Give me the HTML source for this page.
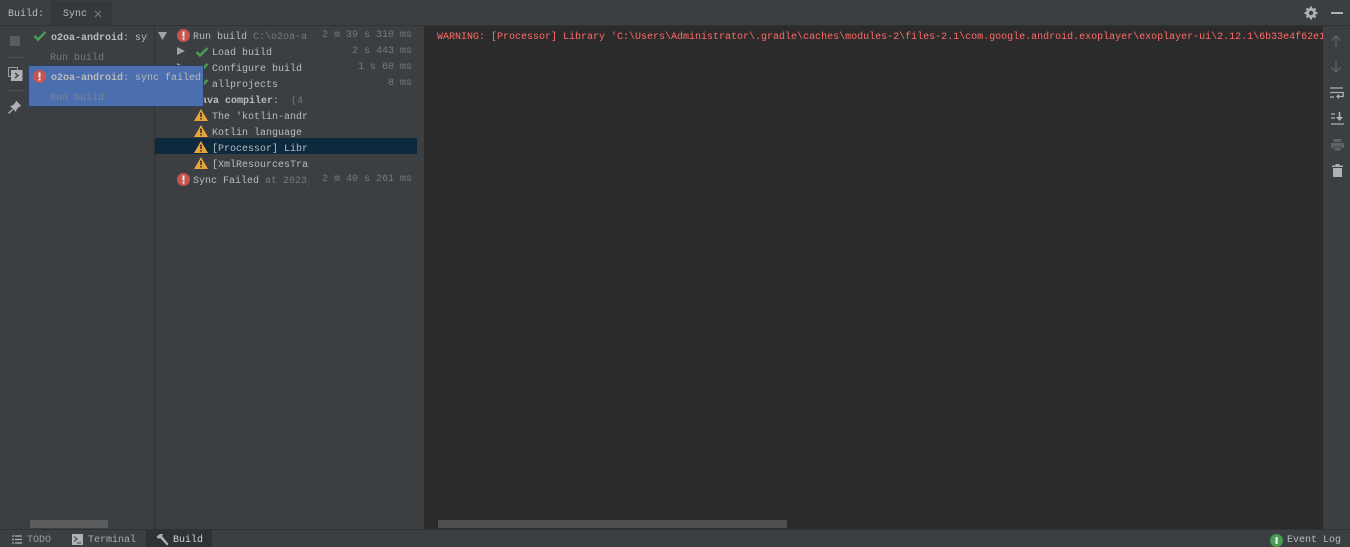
<!DOCTYPE html>
<html><head><meta charset="utf-8">
<style>
html,body{margin:0;padding:0;width:1350px;height:547px;overflow:hidden;background:#3c3f41}
body{position:relative;font-family:"Liberation Mono",monospace;font-size:10px;color:#bbb;line-height:16px;white-space:pre}
.a{position:absolute}
.t{position:absolute;height:16px;overflow:hidden}
.g{color:#787878}
.b{font-weight:bold}
.r{position:absolute;text-align:right;color:#787878;right:938px;height:16px}
svg{position:absolute;overflow:visible}
</style></head><body>
<!-- top bar -->
<div class="a" style="left:0;top:0;width:1350px;height:25px;background:#3c3f41;border-bottom:1px solid #323232"></div>
<div class="a" style="left:51px;top:1px;width:61px;height:24px;background:#36393b"></div>
<div class="t" style="left:8px;top:7px">Build:</div>
<div class="t" style="left:63px;top:7px">Sync</div>
<svg style="left:94px;top:10px" width="8" height="8"><path d="M1 1L7 7M7 1L1 7" stroke="#6f7274" stroke-width="1.3"/></svg>
<svg style="left:1304px;top:6px" width="14" height="14" viewBox="0 0 14 14"><circle cx="7" cy="7" r="3.8" fill="none" stroke="#afb1b3" stroke-width="2.6"/><path d="M7 0.5V13.5M0.5 7H13.5M2.4 2.4L11.6 11.6M11.6 2.4L2.4 11.6" stroke="#afb1b3" stroke-width="2"/><circle cx="7" cy="7" r="2.2" fill="#3c3f41"/></svg>
<div class="a" style="left:1331px;top:12px;width:12px;height:2px;background:#afb1b3"></div>

<!-- left toolbar -->
<div class="a" style="left:10px;top:36px;width:10px;height:10px;background:#595b5d"></div>
<div class="a" style="left:7px;top:57px;width:18px;height:1px;background:#515151"></div>
<svg style="left:8px;top:67px" width="15" height="15" viewBox="0 0 15 15"><rect x="0.5" y="0.5" width="9" height="9" fill="none" stroke="#9a9c9e"/><rect x="3" y="3" width="11.5" height="11" fill="#afb1b3"/><path d="M7 6L10 8.5L7 11" fill="none" stroke="#3c3f41" stroke-width="1.4"/></svg>
<div class="a" style="left:7px;top:90px;width:18px;height:1px;background:#515151"></div>
<svg style="left:8px;top:100px" width="14" height="14" viewBox="0 0 14 14"><path d="M8 0.5L13.5 6L11.5 6.5L8.5 9.5L8 12L2 6L4.5 5.5L7.5 2.5Z" fill="#afb1b3"/><path d="M4.5 9.5L0.5 13.5" stroke="#afb1b3" stroke-width="1.3"/></svg>

<!-- build list -->
<div class="a" style="left:154px;top:26px;width:1px;height:503px;background:#323232"></div>
<svg style="left:33px;top:30px" width="14" height="12" viewBox="0 0 14 12"><path d="M1.5 6L5 9.5L12.5 2" fill="none" stroke="#499c54" stroke-width="2.6"/></svg>
<div class="t" style="left:51px;top:31px;width:97px"><span class="b">o2oa-android</span>: sync</div>
<div class="t g" style="left:50px;top:51px">Run build</div>

<!-- tree -->
<svg style="left:158px;top:32px" width="9" height="8"><path d="M0 0H9L4.5 8Z" fill="#a0a2a4"/></svg>
<svg style="left:177px;top:29px" width="13" height="13" viewBox="0 0 13 13"><circle cx="6.5" cy="6.5" r="6.5" fill="#c75450"/><rect x="5.5" y="2.5" width="2" height="5" fill="#eee"/><rect x="5.5" y="8.5" width="2" height="2" fill="#eee"/></svg>
<div class="t" style="left:193px;top:30px;width:116px">Run build <span class="g">C:\o2oa-a:</span></div>
<div class="r" style="top:28px">2 m 39 s 310 ms</div>

<svg style="left:177px;top:47px" width="8" height="8"><path d="M0 0L8 4L0 8Z" fill="#a0a2a4"/></svg>
<svg style="left:195px;top:46px" width="14" height="12" viewBox="0 0 14 12"><path d="M1.5 6L5 9.5L12.5 2" fill="none" stroke="#499c54" stroke-width="2.6"/></svg>
<div class="t" style="left:212px;top:46px">Load build</div>
<div class="r" style="top:44px">2 s 443 ms</div>

<svg style="left:177px;top:63px" width="8" height="8"><path d="M0 0L8 4L0 8Z" fill="#a0a2a4"/></svg>
<svg style="left:195px;top:62px" width="14" height="12" viewBox="0 0 14 12"><path d="M1.5 6L5 9.5L12.5 2" fill="none" stroke="#499c54" stroke-width="2.6"/></svg>
<div class="t" style="left:212px;top:62px">Configure build</div>
<div class="r" style="top:60px">1 s 60 ms</div>

<svg style="left:195px;top:78px" width="14" height="12" viewBox="0 0 14 12"><path d="M1.5 6L5 9.5L12.5 2" fill="none" stroke="#499c54" stroke-width="2.6"/></svg>
<div class="t" style="left:212px;top:78px">allprojects</div>
<div class="r" style="top:76px">8 ms</div>

<div class="t" style="left:195px;top:94px;width:114px"><span class="b">Java compiler</span>:  <span class="g">(4 w</span></div>

<div class="a" style="left:155px;top:138px;width:262px;height:16px;background:#0d293e"></div>

<svg style="left:194px;top:109px" width="14" height="12" viewBox="0 0 14 12"><path d="M7 0L14 12H0Z" fill="#e8a33d"/><rect x="6.2" y="3.5" width="1.6" height="4.5" fill="#333"/><rect x="6.2" y="9" width="1.6" height="1.6" fill="#333"/></svg>
<div class="t" style="left:212px;top:110px;width:95px">The 'kotlin-android</div>
<svg style="left:194px;top:125px" width="14" height="12" viewBox="0 0 14 12"><path d="M7 0L14 12H0Z" fill="#e8a33d"/><rect x="6.2" y="3.5" width="1.6" height="4.5" fill="#333"/><rect x="6.2" y="9" width="1.6" height="1.6" fill="#333"/></svg>
<div class="t" style="left:212px;top:126px;width:95px">Kotlin language</div>
<svg style="left:194px;top:141px" width="14" height="12" viewBox="0 0 14 12"><path d="M7 0L14 12H0Z" fill="#e8a33d"/><rect x="6.2" y="3.5" width="1.6" height="4.5" fill="#333"/><rect x="6.2" y="9" width="1.6" height="1.6" fill="#333"/></svg>
<div class="t" style="left:212px;top:142px;width:95px">[Processor] Library</div>
<svg style="left:194px;top:157px" width="14" height="12" viewBox="0 0 14 12"><path d="M7 0L14 12H0Z" fill="#e8a33d"/><rect x="6.2" y="3.5" width="1.6" height="4.5" fill="#333"/><rect x="6.2" y="9" width="1.6" height="1.6" fill="#333"/></svg>
<div class="t" style="left:212px;top:158px;width:97px">[XmlResourcesTransf</div>

<svg style="left:177px;top:173px" width="13" height="13" viewBox="0 0 13 13"><circle cx="6.5" cy="6.5" r="6.5" fill="#c75450"/><rect x="5.5" y="2.5" width="2" height="5" fill="#eee"/><rect x="5.5" y="8.5" width="2" height="2" fill="#eee"/></svg>
<div class="t" style="left:193px;top:174px;width:116px">Sync Failed <span class="g">at 2023,</span></div>
<div class="r" style="top:172px">2 m 40 s 261 ms</div>

<!-- popup -->
<div class="a" style="left:29px;top:66px;width:174px;height:40px;background:#4b6eaf;box-shadow:0 0 0 1px #2f3f5c"></div>
<svg style="left:33px;top:70px" width="13" height="13" viewBox="0 0 13 13"><circle cx="6.5" cy="6.5" r="6.5" fill="#c75450"/><rect x="5.5" y="2.5" width="2" height="5" fill="#eee"/><rect x="5.5" y="8.5" width="2" height="2" fill="#eee"/></svg>
<div class="t" style="left:51px;top:71px;width:150px"><span class="b">o2oa-android</span>: sync failed</div>
<div class="t" style="left:50px;top:91px;color:#7d8494">Run build</div>

<!-- console -->
<div class="a" style="left:424px;top:26px;width:899px;height:503px;background:#2b2b2b;overflow:hidden">
<div class="t" style="left:13px;top:4px;width:886px;color:#ff6b68">WARNING: [Processor] Library 'C:\Users\Administrator\.gradle\caches\modules-2\files-2.1\com.google.android.exoplayer\exoplayer-ui\2.12.1\6b33e4f62e1</div>
<div class="a" style="left:14px;top:494px;width:349px;height:8px;background:#4d4f51"></div>
</div>
<div class="a" style="left:30px;top:520px;width:78px;height:8px;background:#5a5c5e"></div>

<!-- right toolbar -->
<svg style="left:1329px;top:34px" width="14" height="14" viewBox="0 0 14 14"><path d="M7 13V2M2.5 6.5L7 2L11.5 6.5" fill="none" stroke="#5f6163" stroke-width="1.4"/></svg>
<svg style="left:1329px;top:60px" width="14" height="14" viewBox="0 0 14 14"><path d="M7 1V12M2.5 7.5L7 12L11.5 7.5" fill="none" stroke="#5f6163" stroke-width="1.4"/></svg>
<svg style="left:1330px;top:87px" width="14" height="13" viewBox="0 0 14 13"><path d="M0 1H13M0 5.5H13.2V9.5H7M0 10H4" fill="none" stroke="#afb1b3" stroke-width="1.3"/><path d="M9 7L6 9.5L9 12Z" fill="#afb1b3"/></svg>
<svg style="left:1331px;top:112px" width="13" height="13" viewBox="0 0 13 13"><path d="M0 2H4M0 6H4M0 12H13" stroke="#afb1b3" stroke-width="1.3"/><path d="M8.5 0V6" stroke="#afb1b3" stroke-width="1.6"/><path d="M5 5H12L8.5 9Z" fill="#afb1b3"/></svg>
<svg style="left:1331px;top:139px" width="13" height="12" viewBox="0 0 13 12"><rect x="2.5" y="0" width="8" height="3" fill="#5f6163"/><rect x="0" y="4" width="13" height="5" fill="#5f6163"/><rect x="3" y="8" width="7" height="4" fill="#5f6163" stroke="#3c3f41" stroke-width="0.8"/></svg>
<svg style="left:1332px;top:164px" width="11" height="13" viewBox="0 0 11 13"><rect x="3.5" y="0" width="4" height="1.5" fill="#afb1b3"/><rect x="0" y="1.5" width="11" height="1.5" fill="#afb1b3"/><path d="M1 4H10V13H1Z" fill="#afb1b3"/></svg>

<!-- status bar -->
<div class="a" style="left:0;top:529px;width:1350px;height:18px;background:#3c3f41;border-top:1px solid #323232;box-sizing:border-box"></div>
<div class="a" style="left:146px;top:530px;width:66px;height:17px;background:#2f3234"></div>
<svg style="left:12px;top:535px" width="10" height="9" viewBox="0 0 10 9"><path d="M0 1H2M3 1H10M0 4.5H2M3 4.5H10M0 8H2M3 8H10" stroke="#afb1b3" stroke-width="1.3"/></svg>
<div class="t" style="left:27px;top:533px;color:#9a9c9e">TODO</div>
<div class="a" style="left:72px;top:534px;width:11px;height:11px;background:#afb1b3"></div>
<svg style="left:72px;top:534px" width="11" height="11"><path d="M2 2.5L5 5L2 7.5M5 9H9" fill="none" stroke="#3c3f41" stroke-width="1.1"/></svg>
<div class="t" style="left:88px;top:533px;color:#a8adb2">Terminal</div>
<svg style="left:156px;top:533px" width="13" height="13" viewBox="0 0 13 13"><path d="M0.5 3.5L4 1H7L6 3L12.5 11L11 12.5L4 5L2.5 6Z" fill="#afb1b3"/></svg>
<div class="t" style="left:173px;top:533px;color:#d0d0d0">Build</div>
<svg style="left:1270px;top:534px" width="13" height="13" viewBox="0 0 13 13"><circle cx="6.5" cy="6.5" r="6.5" fill="#499c54"/><rect x="5.5" y="3" width="2.2" height="7" fill="#e8f2e8"/></svg>
<div class="t" style="left:1287px;top:533px">Event Log</div>
</body></html>
